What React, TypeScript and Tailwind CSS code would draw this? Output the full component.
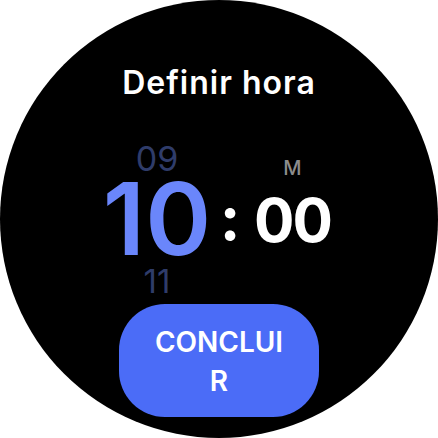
import React from "react";

export default function App() {
  return (
    <div className="w-[438px] h-[438px] bg-white overflow-hidden" style={{ fontFamily: "Inter, 'Noto Sans', sans-serif" }}>
      <div className="w-[438px] h-[438px] rounded-full bg-black flex flex-col items-center pt-[63px]">
        <div className="h-[40px] leading-[40px] text-[32px] font-semibold tracking-[1px] text-white">Definir hora</div>
        <div className="w-full flex flex-row items-start mt-[37px] pl-[102px]">
          <div className="w-[110px] flex flex-col items-center">
            <div className="h-[38px] leading-[38px] text-[34px] font-normal text-[#2f3c6a]">09</div>
            <div className="h-[82px] leading-[82px] text-[100px] font-semibold text-[#6a86fb]">10</div>
            <div className="h-[42px] leading-[42px] text-[33px] font-normal text-[#2f3c6a]">11</div>
          </div>
          <div className="w-[36px] flex flex-col items-center pt-[38px]">
            <div className="h-[80px] leading-[80px] text-[62px] font-bold text-white">:</div>
          </div>
          <div className="w-[89px] flex flex-col items-center pt-[16px]">
            <div className="h-[24px] leading-[24px] text-[20px] font-medium text-[#8c8c8c]">M</div>
            <div className="h-[80px] leading-[80px] text-[60px] font-bold tracking-[-2px] text-white">00</div>
          </div>
        </div>
        <button className="mt-[2px] w-[200px] h-[113px] rounded-[46px] bg-[#4b6cf7] px-[28px] pt-[19px] pb-[16px] text-white text-[28px] font-semibold leading-[39px] break-all text-center">
          CONCLUIR
        </button>
      </div>
    </div>
  );
}
